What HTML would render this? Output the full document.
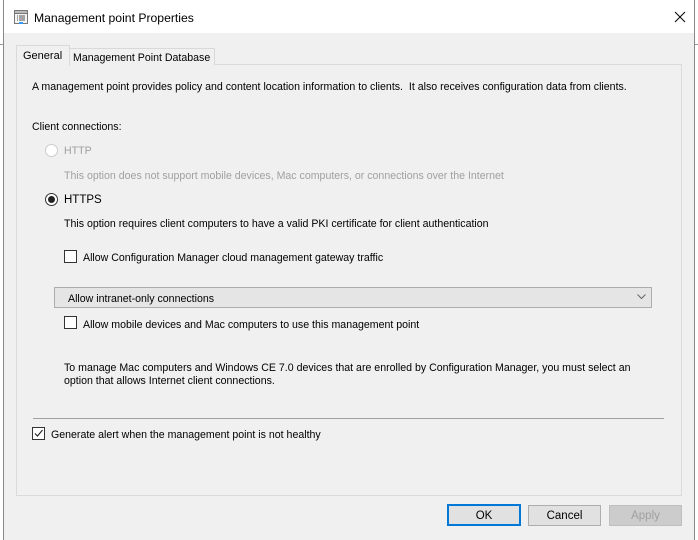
<!DOCTYPE html>
<html><head><style>
body{margin:0;width:698px;height:540px;overflow:hidden;background:#fff;font-family:"Liberation Sans",sans-serif;font-size:10.6px;color:#000;position:relative}
.a{position:absolute;white-space:nowrap;line-height:14px;margin-top:1px}
.win{position:absolute;left:3px;top:0;width:690px;height:540px;background:#f0f0f0;border-left:1px solid #888;border-right:1px solid #888}
.cb{position:absolute;width:11px;height:11px;border:1px solid #333;background:#fff}
.btn{position:absolute;top:505px;height:19px;width:71px;border:1px solid #adadad;background:#e1e1e1;text-align:center;line-height:20px;font-size:11.5px}
</style></head><body>
<div style="position:absolute;left:0;top:0;width:3px;height:540px;background:#fff"></div>
<div style="position:absolute;left:0;top:44px;width:3px;height:1px;background:#999"></div>
<div style="position:absolute;left:694px;top:44px;width:4px;height:1px;background:#999"></div>
<div class="win">
 <div style="position:absolute;left:0;top:0;width:690px;height:33px;background:#fff"></div>
 <svg style="position:absolute;left:9px;top:9px" width="16" height="16" viewBox="0 0 16 16"><rect x="1.5" y="1.5" width="13" height="13" fill="#f4f4f4" stroke="#777"/><rect x="1.5" y="1.5" width="13" height="3" fill="#bbb" stroke="#777"/><path d="M4 7h1M6 7h6M4 9h1M6 9h6M4 11h1M6 11h6" stroke="#555"/><rect x="6" y="13" width="4" height="2" fill="#39f"/></svg>
 <div class="a" style="left:30px;top:10px;font-size:12.2px">Management point Properties</div>
 <svg style="position:absolute;left:670px;top:11px" width="12" height="12"><path d="M1 1L11 11M11 1L1 11" stroke="#000" stroke-width="1"/></svg>
</div>
<div style="position:absolute;left:16px;top:64px;width:664px;height:430px;border:1px solid #dadada;background:#f0f0f0"></div>
<div style="position:absolute;left:69px;top:48px;width:144px;height:16px;border:1px solid #d9d9d9;border-bottom:none;background:#f0f0f0"></div>
<div style="position:absolute;left:16px;top:45px;width:52px;height:20px;border:1px solid #d9d9d9;border-bottom:none;background:#f0f0f0"></div>
<div class="a" style="left:23px;top:48px;font-size:11px">General</div>
<div class="a" style="left:73px;top:50px">Management Point Database</div>
<div class="a" style="left:32px;top:79px">A management point provides policy and content location information to clients.&nbsp; It also receives configuration data from clients.</div>
<div class="a" style="left:32px;top:119px">Client connections:</div>
<div style="position:absolute;left:45px;top:144px;width:11px;height:11px;border:1px solid #ccc;border-radius:50%;background:#fff"></div>
<div class="a" style="left:64px;top:143px;color:#a0a0a0">HTTP</div>
<div class="a" style="left:64px;top:168px;color:#a0a0a0">This option does not support mobile devices, Mac computers, or connections over the Internet</div>
<div style="position:absolute;left:45px;top:193px;width:11px;height:11px;border:1px solid #333;border-radius:50%;background:#fff"></div>
<div style="position:absolute;left:48px;top:196px;width:7px;height:7px;border-radius:50%;background:#222"></div>
<div class="a" style="left:64px;top:192px;font-size:11.5px">HTTPS</div>
<div class="a" style="left:64px;top:216px">This option requires client computers to have a valid PKI certificate for client authentication</div>
<div class="cb" style="left:64px;top:250px"></div>
<div class="a" style="left:83px;top:250px">Allow Configuration Manager cloud management gateway traffic</div>
<div style="position:absolute;left:54px;top:287px;width:596px;height:19px;border:1px solid #adadad;background:#e5e5e5"></div>
<div class="a" style="left:68px;top:291px">Allow intranet-only connections</div>
<svg style="position:absolute;left:637px;top:294px" width="9" height="6"><path d="M0.5 0.5L4.5 4.5L8.5 0.5" fill="none" stroke="#666"/></svg>
<div class="cb" style="left:64px;top:316px"></div>
<div class="a" style="left:83px;top:317px">Allow mobile devices and Mac computers to use this management point</div>
<div class="a" style="left:64px;top:360px">To manage Mac computers and Windows CE 7.0 devices that are enrolled by Configuration Manager, you must select an</div>
<div class="a" style="left:64px;top:373px">option that allows Internet client connections.</div>
<div style="position:absolute;left:33px;top:418px;width:631px;height:1px;background:#a0a0a0"></div>
<div class="cb" style="left:32px;top:427px"></div>
<svg style="position:absolute;left:33px;top:428px" width="11" height="11"><path d="M2 5.5L4.5 8L9.5 2" fill="none" stroke="#222" stroke-width="1.1"/></svg>
<div class="a" style="left:51px;top:427px">Generate alert when the management point is not healthy</div>
<div class="btn" style="left:447px;border:2px solid #0078d7;width:70px;height:18px;top:504px">OK</div>
<div class="btn" style="left:528px">Cancel</div>
<div class="btn" style="left:609px;background:#ccc;border-color:#bfbfbf;color:#a0a0a0">Apply</div>
</body></html>
